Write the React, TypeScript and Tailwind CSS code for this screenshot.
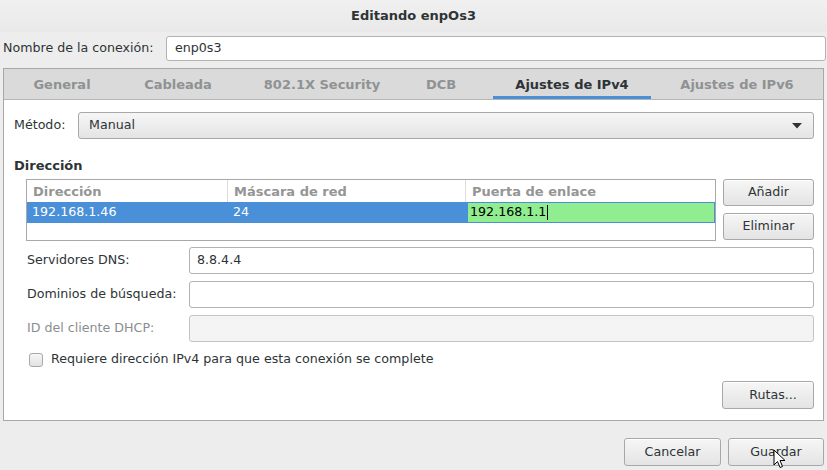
import type { ReactNode } from 'react'

const tabs = [
  { label: 'General', w: 'w-[78px]' },
  { label: 'Cableada', w: 'w-[154px]' },
  { label: '802.1X Security', w: 'w-[134px]' },
  { label: 'DCB', w: 'w-[104px]' },
  { label: 'Ajustes de IPv4', w: 'w-[158px]', active: true },
  { label: 'Ajustes de IPv6', w: 'w-[172px]' },
]

function Button({ children, className = '' }: { children: ReactNode; className?: string }) {
  return (
    <div
      className={`flex items-center justify-center rounded-[3px] border border-[#a8a8a8] bg-gradient-to-b from-[#f6f6f6] to-[#e4e4e4] text-[#2e3436] shadow-[inset_0_1px_0_#ffffff] ${className}`}
    >
      {children}
    </div>
  )
}

function Field({ label, value, disabled }: { label: string; value?: string; disabled?: boolean }) {
  return (
    <div className="flex h-[27px] items-center">
      <span className={`w-[163px] pl-px ${disabled ? 'text-[#8b8e8f]' : ''}`}>{label}</span>
      <div
        className={`flex h-full flex-1 items-center rounded-[3px] border px-[7px] ${
          disabled ? 'border-[#c4c4c2] bg-[#f4f4f4]' : 'border-[#b2b2b0] bg-white'
        }`}
      >
        {value}
      </div>
    </div>
  )
}

export default function App() {
  return (
    <div
      className="relative flex h-[470px] w-[827px] flex-col overflow-hidden bg-[#ededed] text-[12.65px] leading-none text-[#2e3436]"
      style={{ fontFamily: '"DejaVu Sans", sans-serif' }}
    >
      {/* Title bar */}
      <div className="flex h-[32px] items-center justify-center bg-gradient-to-b from-[#f0f0f0] to-[#e9e9e9] pb-[2px] text-[13px] font-bold">
        Editando enpOs3
      </div>

      {/* Connection name */}
      <div className="mt-[4px] flex h-[25px] items-center pl-[3px] pr-px">
        <span className="w-[163px]">Nombre de la conexión:</span>
        <div className="flex h-full flex-1 items-center rounded-[3px] border border-[#b2b2b0] bg-white px-[8px]">
          enp0s3
        </div>
      </div>

      {/* Notebook */}
      <div className="mx-[3px] mt-[7px] flex h-[353px] flex-col border border-[#a8a8a8] bg-white">
        <div className="flex h-[31px] shrink-0 border-b border-[#b6b6b3] bg-[#dadada] pl-[19px] text-[13px]">
          {tabs.map((t) => (
            <div
              key={t.label}
              className={`${t.w} relative flex items-center justify-center font-bold ${
                t.active ? 'text-[#2e3436]' : 'text-[#8f9293]'
              }`}
            >
              {t.label}
              {t.active && <div className="absolute bottom-0 left-0 right-0 h-[3px] bg-[#4a90d9]" />}
            </div>
          ))}
        </div>

        <div className="flex flex-1 flex-col pl-[10px] pr-[9px]">
          {/* Método */}
          <div className="mt-[11px] flex h-[28px] items-center pt-px">
            <span className="w-[64px]">Método:</span>
            <div className="flex h-full flex-1 items-center justify-between rounded-[3px] border border-[#a8a8a8] bg-gradient-to-b from-[#f6f6f6] to-[#e4e4e4] pl-[10px] pr-[11px]">
              Manual
              <svg width="10" height="6" viewBox="0 0 10 6">
                <path d="M0 0 L10 0 L5 5.5 Z" fill="#2e3436" />
              </svg>
            </div>
          </div>

          <div className="mt-[20px] text-[13px] font-bold">Dirección</div>

          {/* Address table + buttons */}
          <div className="mt-[7px] flex pl-[12px]">
            <div className="flex h-[62px] w-[690px] flex-col border border-[#a8a8a8] bg-white">
              <div className="flex h-[22px] shrink-0 items-center text-[13px] font-bold text-[#959595]">
                <div className="flex h-full w-[201px] items-center border-r border-[#dcdcdc] pl-[6px]">Dirección</div>
                <div className="flex h-full w-[238px] items-center border-r border-[#dcdcdc] pl-[6px]">Máscara de red</div>
                <div className="flex h-full flex-1 items-center pl-[6px]">Puerta de enlace</div>
              </div>
              <div className="flex h-[21px] shrink-0 items-center bg-[#4a90d9] text-white">
                <div className="w-[201px] pl-[5px]">192.168.1.46</div>
                <div className="w-[239px] pl-[5px]">24</div>
                <div className="flex h-full flex-1 items-center border border-[#4a90d9] bg-[#90ee90] pl-[2px] text-black">
                  192.168.1.1<span className="ml-px h-[15px] w-px bg-black" />
                </div>
              </div>
            </div>
            <div className="ml-[7px] flex flex-1 flex-col gap-[7px]">
              <Button className="h-[27px]">Añadir</Button>
              <Button className="h-[27px]">Eliminar</Button>
            </div>
          </div>

          {/* Fields */}
          <div className="mt-[6px] flex flex-col gap-[7px] pl-[12px]">
            <Field label="Servidores DNS:" value="8.8.4.4" />
            <Field label="Dominios de búsqueda:" />
            <Field label="ID del cliente DHCP:" disabled />
          </div>

          <div className="mt-[10px] flex h-[15px] items-center pl-[15px]">
            <div className="h-[14px] w-[14px] rounded-[3px] border border-[#a8a8a8] bg-gradient-to-b from-[#f6f6f6] to-[#e2e2e2]" />
            <span className="ml-[8px]">Requiere dirección IPv4 para que esta conexión se complete</span>
          </div>

          <div className="mt-[14px] flex justify-end">
            <Button className="h-[28px] w-[92px] pl-[10px]">Rutas...</Button>
          </div>
        </div>
      </div>

      {/* Dialog buttons */}
      <div className="mt-[17px] flex justify-end gap-[7px] pr-[3px]">
        <Button className="h-[28px] w-[97px]">Cancelar</Button>
        <Button className="h-[28px] w-[96px]">Guardar</Button>
      </div>

      {/* Mouse pointer */}
      <svg className="absolute left-[773px] top-[449px]" width="14" height="21" viewBox="0 0 14 21">
        <path d="M1 1 L1 16 L4.5 12.5 L7 18.5 L9.5 17.5 L7 11.5 L12 11.5 Z" fill="#ffffff" stroke="#000000" strokeWidth="1" />
      </svg>
    </div>
  )
}
